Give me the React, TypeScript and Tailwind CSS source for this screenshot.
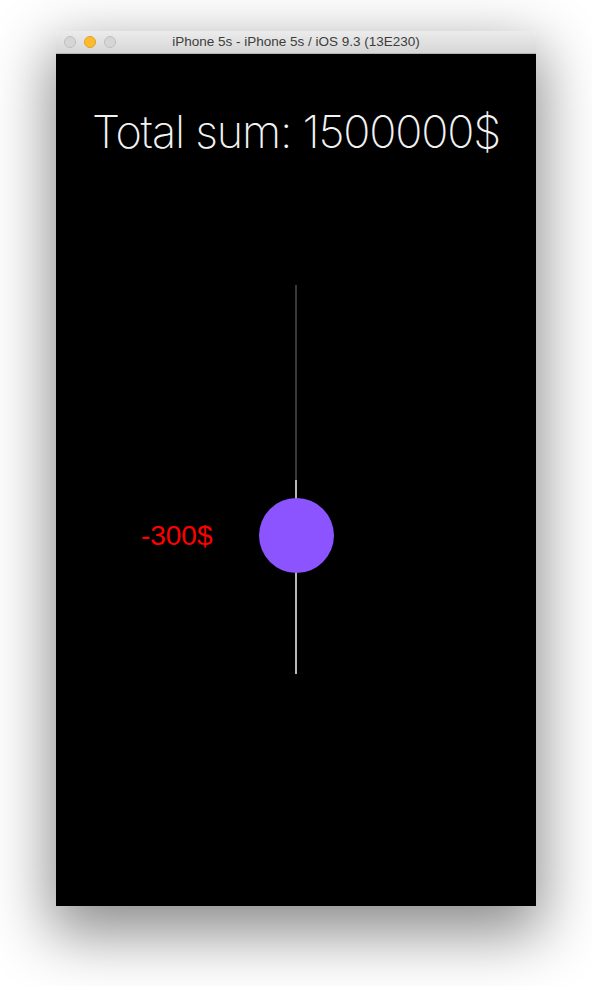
export default function App() {
  return (
    <div className="w-[592px] h-[986px] bg-white pt-[31px] pl-[56px] overflow-hidden">
      <div className="w-[480px] rounded-t-[5px] shadow-[0_22px_60px_6px_rgba(0,0,0,0.45)]">
        {/* title bar */}
        <div className="relative h-[23px] rounded-t-[5px] bg-gradient-to-b from-[#ececec] to-[#d6d6d6] border-b border-[#b4b4b4] flex items-center justify-center">
          <div className="absolute left-[8px] top-[5px] flex gap-[8px]">
            <span className="w-[12px] h-[12px] rounded-full bg-[#d6d6d6] border border-[#c0c0c0]" />
            <span className="w-[12px] h-[12px] rounded-full bg-[#fdbc2c] border border-[#dfa12d]" />
            <span className="w-[12px] h-[12px] rounded-full bg-[#d6d6d6] border border-[#c0c0c0]" />
          </div>
          <span className="text-[13.5px] text-[#3d3d3d] font-['Liberation_Sans',sans-serif]">
            iPhone 5s - iPhone 5s / iOS 9.3 (13E230)
          </span>
        </div>

        {/* screen */}
        <div className="h-[852px] bg-black flex flex-col items-center">
          <h1 className="mt-[51px] text-[45px] leading-[54px] font-extralight text-[#f2f2f2] font-['Helvetica_Neue',Inter,sans-serif] tracking-[-1.2px]">
            Total sum: 1500000$
          </h1>

          <div className="relative mt-[126px] w-[75px] h-[389px] flex justify-center">
            <div className="w-[2px] h-full flex flex-col">
              <div className="h-[195px] bg-[#3a3a3a]" />
              <div className="flex-1 bg-[#b8b8b8]" />
            </div>
            <div className="absolute left-0 top-[213px] w-[75px] h-[75px] rounded-full bg-[#8c54fe]">
              <span className="absolute right-full mr-[46px] top-1/2 -translate-y-1/2 text-[28px] leading-none text-[#ff0000] font-['Liberation_Sans',Arial,sans-serif]">
                -300$
              </span>
            </div>
          </div>
        </div>
      </div>
    </div>
  );
}
